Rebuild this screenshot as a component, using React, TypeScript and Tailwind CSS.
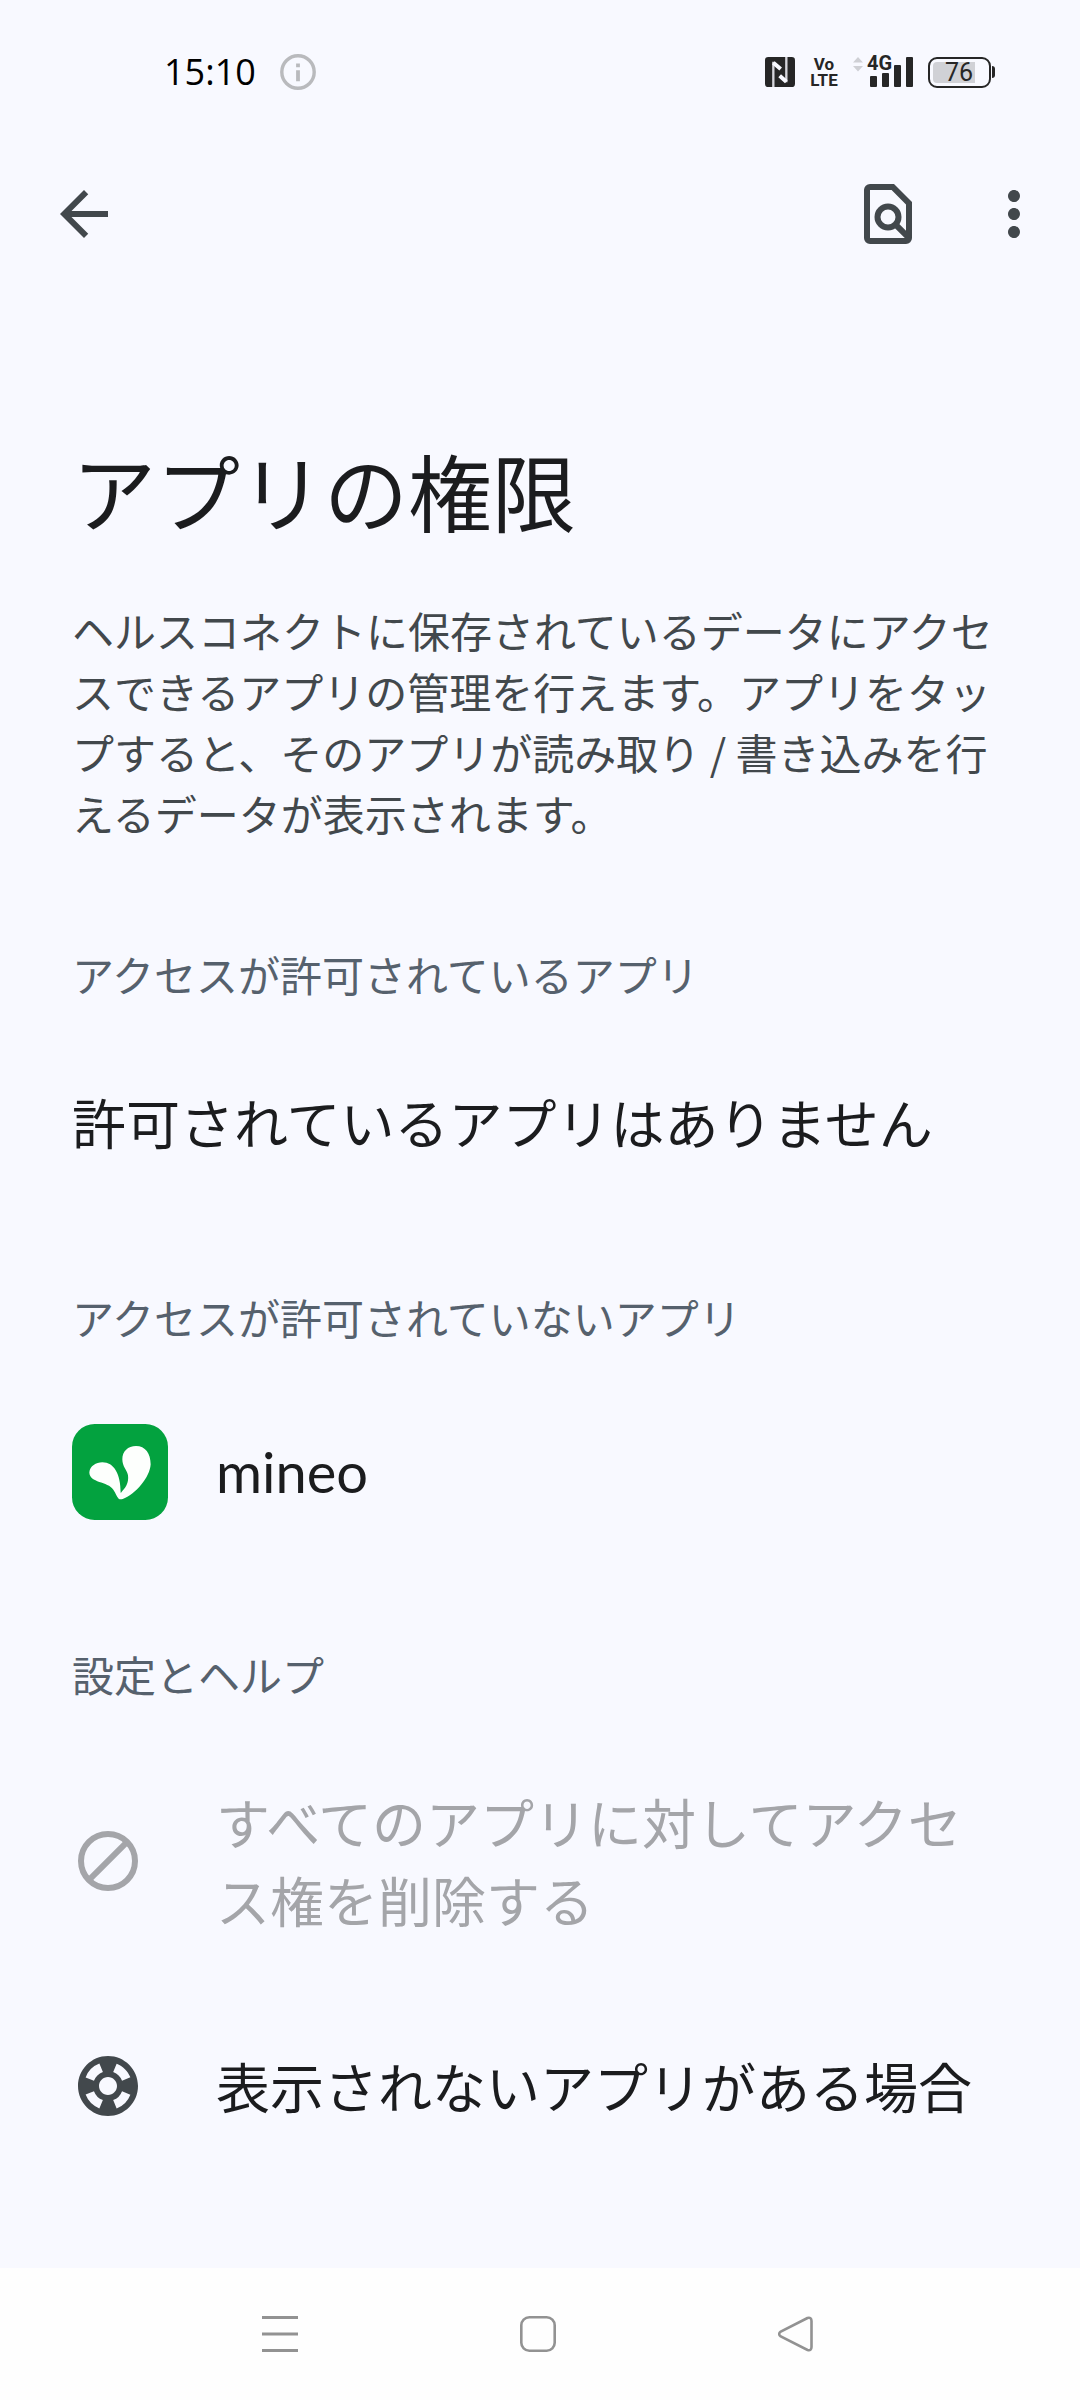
import type { ReactNode } from 'react';
import { MdArrowBack, MdMoreVert, MdSupport } from 'react-icons/md';

const InfoIcon = () => (
  <svg viewBox="0 0 36 36" className="w-9 h-9 text-[#b9babd]" fill="none" stroke="currentColor">
    <circle cx="18" cy="18" r="16.2" strokeWidth="3.4" />
    <path d="M18 9.4v3.8M18 16.2v11" strokeWidth="3.8" />
  </svg>
);

const NfcIcon = () => (
  <svg viewBox="0 0 90 90" className="w-[30px] h-[30px]">
    <rect width="90" height="90" rx="10" fill="#262626" />
    <path d="M25 14v76M64 0v76" stroke="#d6d6dc" strokeWidth="7" />
    <path d="M25 17 47 36M44 56 64 74" stroke="#f8f9ff" strokeWidth="12" />
  </svg>
);

const SignalIcon = () => (
  <div className="relative">
    <svg viewBox="0 0 60 36" className="w-[60px] h-9">
      <path d="M0 8.5 5 3l5 5.5zM0 12h10l-5 5.5z" fill="#cfd0d5" />
      <g fill="#262626">
        <rect x="17" y="22" width="7" height="11" rx="1" />
        <rect x="29" y="19" width="7" height="14" rx="1" />
        <rect x="41" y="11" width="7" height="22" rx="1" />
        <rect x="53" y="3" width="7" height="30" rx="1" />
      </g>
    </svg>
    <span className="absolute left-[14px] top-0 text-[20px] leading-[18px] font-bold">4G</span>
  </div>
);

const Battery = () => (
  <div className="flex items-center">
    <div className="w-[63px] h-[31px] p-[3px] border-2 border-[#262626] rounded-[9px]">
      <div className="w-[42px] h-full pl-3 rounded-l bg-[#d0d1d6] flex items-center">
        <span className="text-[25px] leading-none">76</span>
      </div>
    </div>
    <div className="ml-px w-[3px] h-3 rounded-r bg-[#262626]" />
  </div>
);

const StatusBar = () => (
  <div className="h-36 pl-[164px] pr-[85px] flex items-center justify-between font-['Roboto',sans-serif] text-[#262626]">
    <div className="flex items-center gap-6">
      <span className="font-['Open_Sans',sans-serif] text-[36px] leading-none font-medium text-black">15:10</span>
      <InfoIcon />
    </div>
    <div className="flex items-center gap-[15px]">
      <NfcIcon />
      <div className="w-7 text-[17px] leading-[16px] font-bold text-center">
        <div>Vo</div>
        <div>LTE</div>
      </div>
      <SignalIcon />
      <Battery />
    </div>
  </div>
);

const FindInPageIcon = () => (
  <svg viewBox="0 0 24 24" className="w-[72px] h-[72px]">
    <path
      fillRule="evenodd"
      fill="currentColor"
      d="M6 2h8l6 6v12a2 2 0 0 1-2 2H6a2 2 0 0 1-2-2V4a2 2 0 0 1 2-2zm0 2v16h12V8.8L13.2 4z"
    />
    <circle cx="12" cy="13" r="3.5" fill="none" stroke="currentColor" strokeWidth="2" />
    <path d="m14.3 15.3 4.5 4.5" stroke="currentColor" strokeWidth="2" />
  </svg>
);

const Toolbar = () => (
  <header className="h-[140px] pl-12 pr-[30px] flex items-center justify-between text-[#42484c]">
    <button type="button" aria-label="戻る">
      <MdArrowBack size={72} />
    </button>
    <div className="flex items-center gap-[54px]">
      <button type="button" aria-label="検索">
        <FindInPageIcon />
      </button>
      <button type="button" aria-label="その他">
        <MdMoreVert size={72} />
      </button>
    </div>
  </header>
);

const MineoLogo = () => (
  <svg viewBox="0 0 288 288" className="w-24 h-24">
    <rect width="288" height="288" rx="68" fill="#03a23f" />
    <path
      d="M147 206C160 192 171 178 168 154C165 138 151 128 151 106C151 82 168 66 192 66C220 66 236 88 236 121C234 160 190 212 152 225Q144 227 140 224C134 218 132 208 124 197C108 172 52 178 52 145C54 126 72 115 91 115C126 115 146 150 146 206Z"
      fill="#fdfffd"
    />
  </svg>
);

const BlockIcon = () => (
  <svg viewBox="0 0 24 24" className="w-[72px] h-[72px]" fill="none" stroke="currentColor" strokeWidth="2">
    <circle cx="12" cy="12" r="9" />
    <path d="M18.3 5.7 5.7 18.3" />
  </svg>
);

interface SectionProps {
  title: string;
  children: ReactNode;
}

const Section = ({ title, children }: SectionProps) => (
  <section>
    <h2 className="mb-[25px] text-[42px] leading-[61px] text-[#56616d]">{title}</h2>
    {children}
  </section>
);

interface ItemProps {
  icon: ReactNode;
  label: string;
  disabled?: boolean;
}

const Item = ({ icon, label, disabled }: ItemProps) => (
  <button
    type="button"
    disabled={disabled}
    className="w-full py-[54px] flex items-center gap-[72px] text-left text-[54px] leading-[78px] text-[#1b1c1e] disabled:text-[#a4a5a9]"
  >
    <span className={disabled ? 'shrink-0' : 'shrink-0 text-[#42484c]'}>{icon}</span>
    <span>{label}</span>
  </button>
);

const NavBar = () => (
  <nav className="mt-auto h-[132px] bg-[#fefefe] flex items-center justify-center gap-[222px] pr-1 text-[#929292]">
    <button type="button" aria-label="履歴">
      <svg viewBox="0 0 36 36" className="w-9 h-9" stroke="currentColor" strokeWidth="3">
        <path d="M0 1.5h36M0 18h36M0 34.5h36" />
      </svg>
    </button>
    <button type="button" aria-label="ホーム">
      <svg viewBox="0 0 36 36" className="w-9 h-9" fill="none" stroke="currentColor" strokeWidth="2.6">
        <rect x="1.3" y="1.3" width="33.4" height="33.4" rx="8" />
      </svg>
    </button>
    <button type="button" aria-label="戻る">
      <svg viewBox="0 0 36 36" className="w-9 h-9" fill="none" stroke="currentColor" strokeWidth="2.6">
        <path d="M29.5 2 2.8 15.5Q-.5 18 2.8 20.5L29.5 34Q33.5 35 33.5 31V5Q33.5 1 29.5 2z" />
      </svg>
    </button>
  </nav>
);

const App = () => {
  return (
    <div className="min-h-screen flex flex-col bg-[#f8f9ff] font-['Noto_Sans_CJK_JP',sans-serif] text-[#1b1c1e]">
      <StatusBar />
      <Toolbar />

      <main className="px-[72px] pt-[145px] pb-20">
        <h1 className="text-[84px] leading-[122px]">アプリの権限</h1>
        <p className="mt-12 mb-[100px] text-[42px] leading-[61px] text-[#42484c]">
          ヘルスコネクトに保存されているデータにアクセスできるアプリの管理を行えます。アプリをタップすると、そのアプリが読み取り / 書き込みを行えるデータが表示されます。
        </p>

        <div className="flex flex-col gap-[71px]">
          <Section title="アクセスが許可されているアプリ">
            <p className="py-[54px] text-[54px] leading-[78px]">許可されているアプリはありません</p>
          </Section>

          <Section title="アクセスが許可されていないアプリ">
            <button type="button" className="w-full py-[52px] flex items-center gap-12 text-left">
              <MineoLogo />
              <span className="font-['Lato',sans-serif] text-[56px] leading-[78px]">mineo</span>
            </button>
          </Section>

          <Section title="設定とヘルプ">
            <Item icon={<BlockIcon />} label="すべてのアプリに対してアクセス権を削除する" disabled />
            <Item icon={<MdSupport size={72} />} label="表示されないアプリがある場合" />
          </Section>
        </div>
      </main>

      <NavBar />
    </div>
  );
};

export default App;
